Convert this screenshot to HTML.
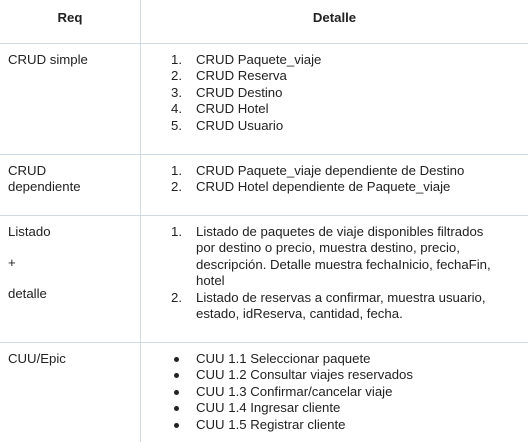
<!DOCTYPE html>
<html><head><meta charset="utf-8"><style>
body{margin:0;width:528px;height:442px;background:#fff;position:relative;overflow:hidden;font-family:"Liberation Sans",Arial,sans-serif;font-size:13.2px;color:#222;}
.h{position:absolute;left:0;width:528px;height:1px;background:#cfdae3}
.v{position:absolute;left:140px;top:0;width:1px;height:442px;background:#cfdae3}
.t{position:absolute;line-height:16.6px;white-space:nowrap}
.n{position:absolute;line-height:16.6px;text-align:right;width:20px;left:162px}
b{font-weight:bold}
.dot{position:absolute;left:174px;width:5px;height:5px;border-radius:50%;background:#222}
.w{position:absolute;left:0;top:1.5px;width:528px;height:442px}
</style></head><body>
<div class="v"></div>
<div class="h" style="top:43px"></div>
<div class="h" style="top:154px"></div>
<div class="h" style="top:215px"></div>
<div class="h" style="top:342px"></div>
<div class="w">
<div class="t" style="left:0;width:140px;text-align:center;top:8px"><b>Req</b></div>
<div class="t" style="left:141px;width:387px;text-align:center;top:8px"><b>Detalle</b></div>

<div class="t" style="left:8px;top:50px">CRUD simple</div>
<div class="n" style="top:50px">1.</div><div class="t" style="left:196px;top:50px">CRUD Paquete_viaje</div>
<div class="n" style="top:66.6px">2.</div><div class="t" style="left:196px;top:66.6px">CRUD Reserva</div>
<div class="n" style="top:83.2px">3.</div><div class="t" style="left:196px;top:83.2px">CRUD Destino</div>
<div class="n" style="top:99.8px">4.</div><div class="t" style="left:196px;top:99.8px">CRUD Hotel</div>
<div class="n" style="top:116.4px">5.</div><div class="t" style="left:196px;top:116.4px">CRUD Usuario</div>

<div class="t" style="left:8px;top:161px">CRUD<br>dependiente</div>
<div class="n" style="top:161px">1.</div><div class="t" style="left:196px;top:161px">CRUD Paquete_viaje dependiente de Destino</div>
<div class="n" style="top:177.6px">2.</div><div class="t" style="left:196px;top:177.6px">CRUD Hotel dependiente de Paquete_viaje</div>

<div class="t" style="left:8px;top:222px">Listado</div>
<div class="t" style="left:8px;top:253px">+</div>
<div class="t" style="left:8px;top:284px">detalle</div>
<div class="n" style="top:222px">1.</div>
<div class="t" style="left:196px;top:222px">Listado de paquetes de viaje disponibles filtrados<br>por destino o precio, muestra destino, precio,<br>descripción. Detalle muestra fechaInicio, fechaFin,<br>hotel</div>
<div class="n" style="top:288.4px">2.</div>
<div class="t" style="left:196px;top:288.4px">Listado de reservas a confirmar, muestra usuario,<br>estado, idReserva, cantidad, fecha.</div>

<div class="t" style="left:8px;top:349px">CUU/Epic</div>
<div class="dot" style="top:355px"></div><div class="t" style="left:196px;top:349px">CUU 1.1 Seleccionar paquete</div>
<div class="dot" style="top:371.6px"></div><div class="t" style="left:196px;top:365.6px">CUU 1.2 Consultar viajes reservados</div>
<div class="dot" style="top:388.2px"></div><div class="t" style="left:196px;top:382.2px">CUU 1.3 Confirmar/cancelar viaje</div>
<div class="dot" style="top:404.8px"></div><div class="t" style="left:196px;top:398.8px">CUU 1.4 Ingresar cliente</div>
<div class="dot" style="top:421.4px"></div><div class="t" style="left:196px;top:415.4px">CUU 1.5 Registrar cliente</div>
</div>
</body></html>
